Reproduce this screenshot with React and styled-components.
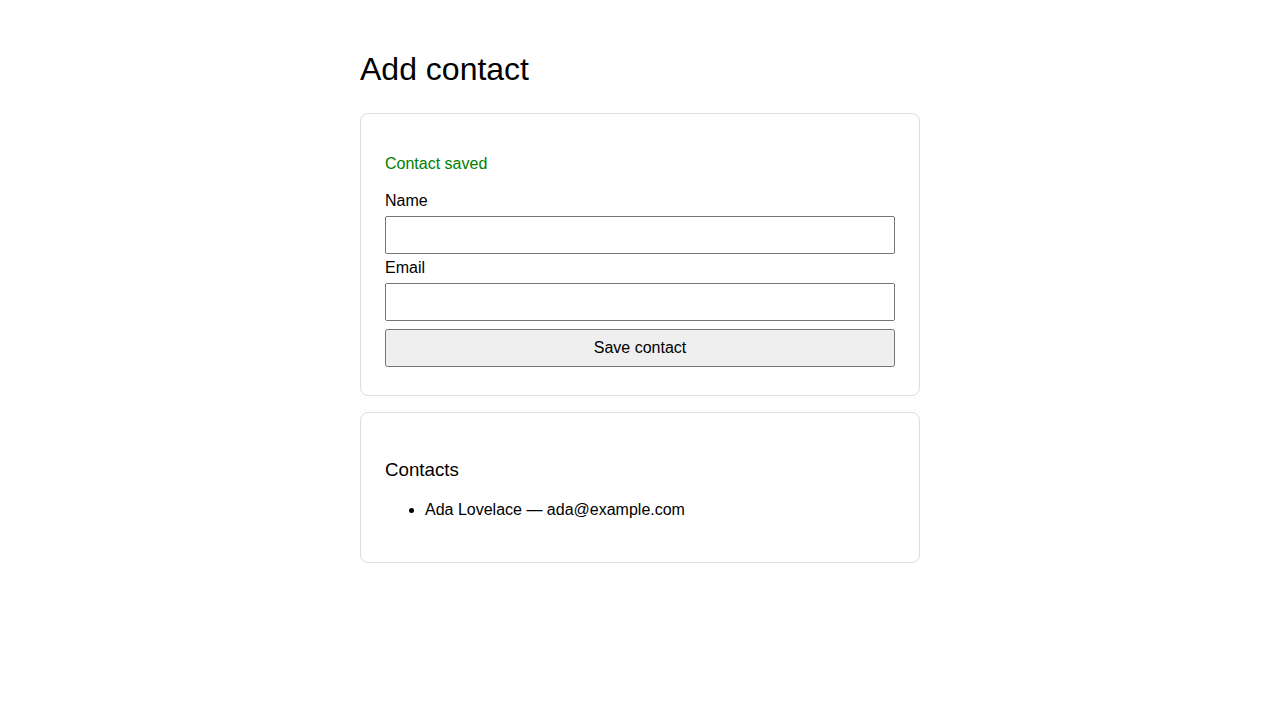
import React, { useState } from "react";
import styled, { createGlobalStyle } from "styled-components";

const GlobalStyle = createGlobalStyle`
  body {
    margin: 8px;
    background: #fff;
    color: #000;
    font-family: "Liberation Sans", Arial, sans-serif;
    font-size: 16px;
  }
`;

export default function App() {
  const [contacts] = useState([
    { name: "Ada Lovelace", email: "ada@example.com" },
  ]);

  return (
    <>
      <GlobalStyle />
      <Main>
        <Title>Add contact</Title>

        <Card>
          <Status role="status">Contact saved</Status>
          <Form onSubmit={(e) => e.preventDefault()}>
            <Label htmlFor="name">Name</Label>
            <Input id="name" type="text" />
            <Label htmlFor="email">Email</Label>
            <Input id="email" type="email" />
            <Button type="submit">Save contact</Button>
          </Form>
        </Card>

        <Card>
          <Heading>Contacts</Heading>
          <List>
            {contacts.map((c, i) => (
              <li key={i}>
                {c.name} — {c.email}
              </li>
            ))}
          </List>
        </Card>
      </Main>
    </>
  );
}

const Main = styled.main`
  max-width: 560px;
  margin: 0 auto;
  padding: 24px 0;
`;

const Title = styled.h1`
  font-size: 32px;
  line-height: 32px;
  font-weight: 400;
  margin: 21px 0 28px;
`;

const Card = styled.section`
  border: 1px solid #ddd;
  border-radius: 8px;
  padding: 24px;
  margin-bottom: 16px;
`;

const Status = styled.p`
  color: green;
  line-height: 19px;
  margin: 16px 0 18px;
`;

const Form = styled.form`
  padding-bottom: 4px;
`;

const Label = styled.label`
  display: block;
  line-height: 20px;
  margin-bottom: 5px;
`;

const Input = styled.input`
  display: block;
  box-sizing: border-box;
  width: 100%;
  height: 38px;
  padding: 8px;
  margin: 0 0 4px;
  font-size: 16px;
`;

const Button = styled.button`
  display: block;
  box-sizing: border-box;
  width: 100%;
  height: 38px;
  margin: 8px 0 0;
  font-size: 16px;
  font-family: "Liberation Sans", Arial, sans-serif;
`;

const Heading = styled.h2`
  font-size: 18.72px;
  line-height: 23px;
  font-weight: 400;
  margin: 21px 0 19px;
`;

const List = styled.ul`
  margin: 0 0 18px;
  padding-left: 40px;

  li {
    line-height: 20px;
  }
`;
